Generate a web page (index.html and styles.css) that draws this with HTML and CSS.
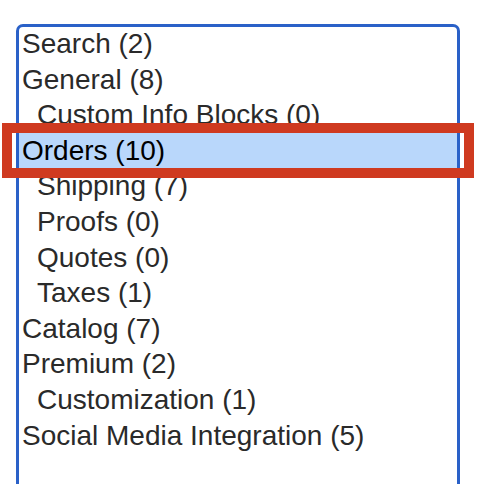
FILE: index.html
```
<!doctype html>
<html lang="en">
<head>
	<meta charset="UTF-8">
	<title>Settings groups</title>
	<link rel="stylesheet" href="styles.css">
</head>
<body>
<div class="page">
	<div class="listbox">
		<ul class="options">
			<li>Search (2)</li>
			<li>General (8)</li>
			<li class="sub">Custom Info Blocks (0)</li>
			<li class="selected">Orders (10)</li>
			<li class="sub">Shipping (7)</li>
			<li class="sub">Proofs (0)</li>
			<li class="sub">Quotes (0)</li>
			<li class="sub">Taxes (1)</li>
			<li>Catalog (7)</li>
			<li>Premium (2)</li>
			<li class="sub">Customization (1)</li>
			<li>Social Media Integration (5)</li>
		</ul>
	</div>
	<div class="mark"></div>
</div>
</body>
</html>
```
FILE: styles.css
```
*{
	margin: 0;
	padding: 0;
	box-sizing: border-box;
}
html, body {
	height: 100%;
	overflow: hidden;
	background: #fff;
}
ul {
	list-style: none;
}

.page {
	position: relative;
	padding: 24px 0 0 16px;
	font-family: "Liberation Sans", Arial, sans-serif;
	font-size: 28px;
	color: #2a2a2a;
}

.listbox {
	width: 444px;
	height: 520px;
	border: 3px solid #2a61c8;
	border-radius: 7px;
	padding: 0;
}
.options {
	margin-top: -1px;
}
.options li {
	height: 35.6px;
	line-height: 35.6px;
	padding-left: 3px;
	white-space: nowrap;
}
.options li.sub {
	padding-left: 18px;
}
.options li.selected {
	background: #b9d7fb;
	color: #000;
}

/* annotation frame over the selected row */
.mark {
	position: absolute;
	left: 2px;
	top: 123px;
	width: 472px;
	height: 55px;
	border: 10px solid #cf3a20;
}
```
